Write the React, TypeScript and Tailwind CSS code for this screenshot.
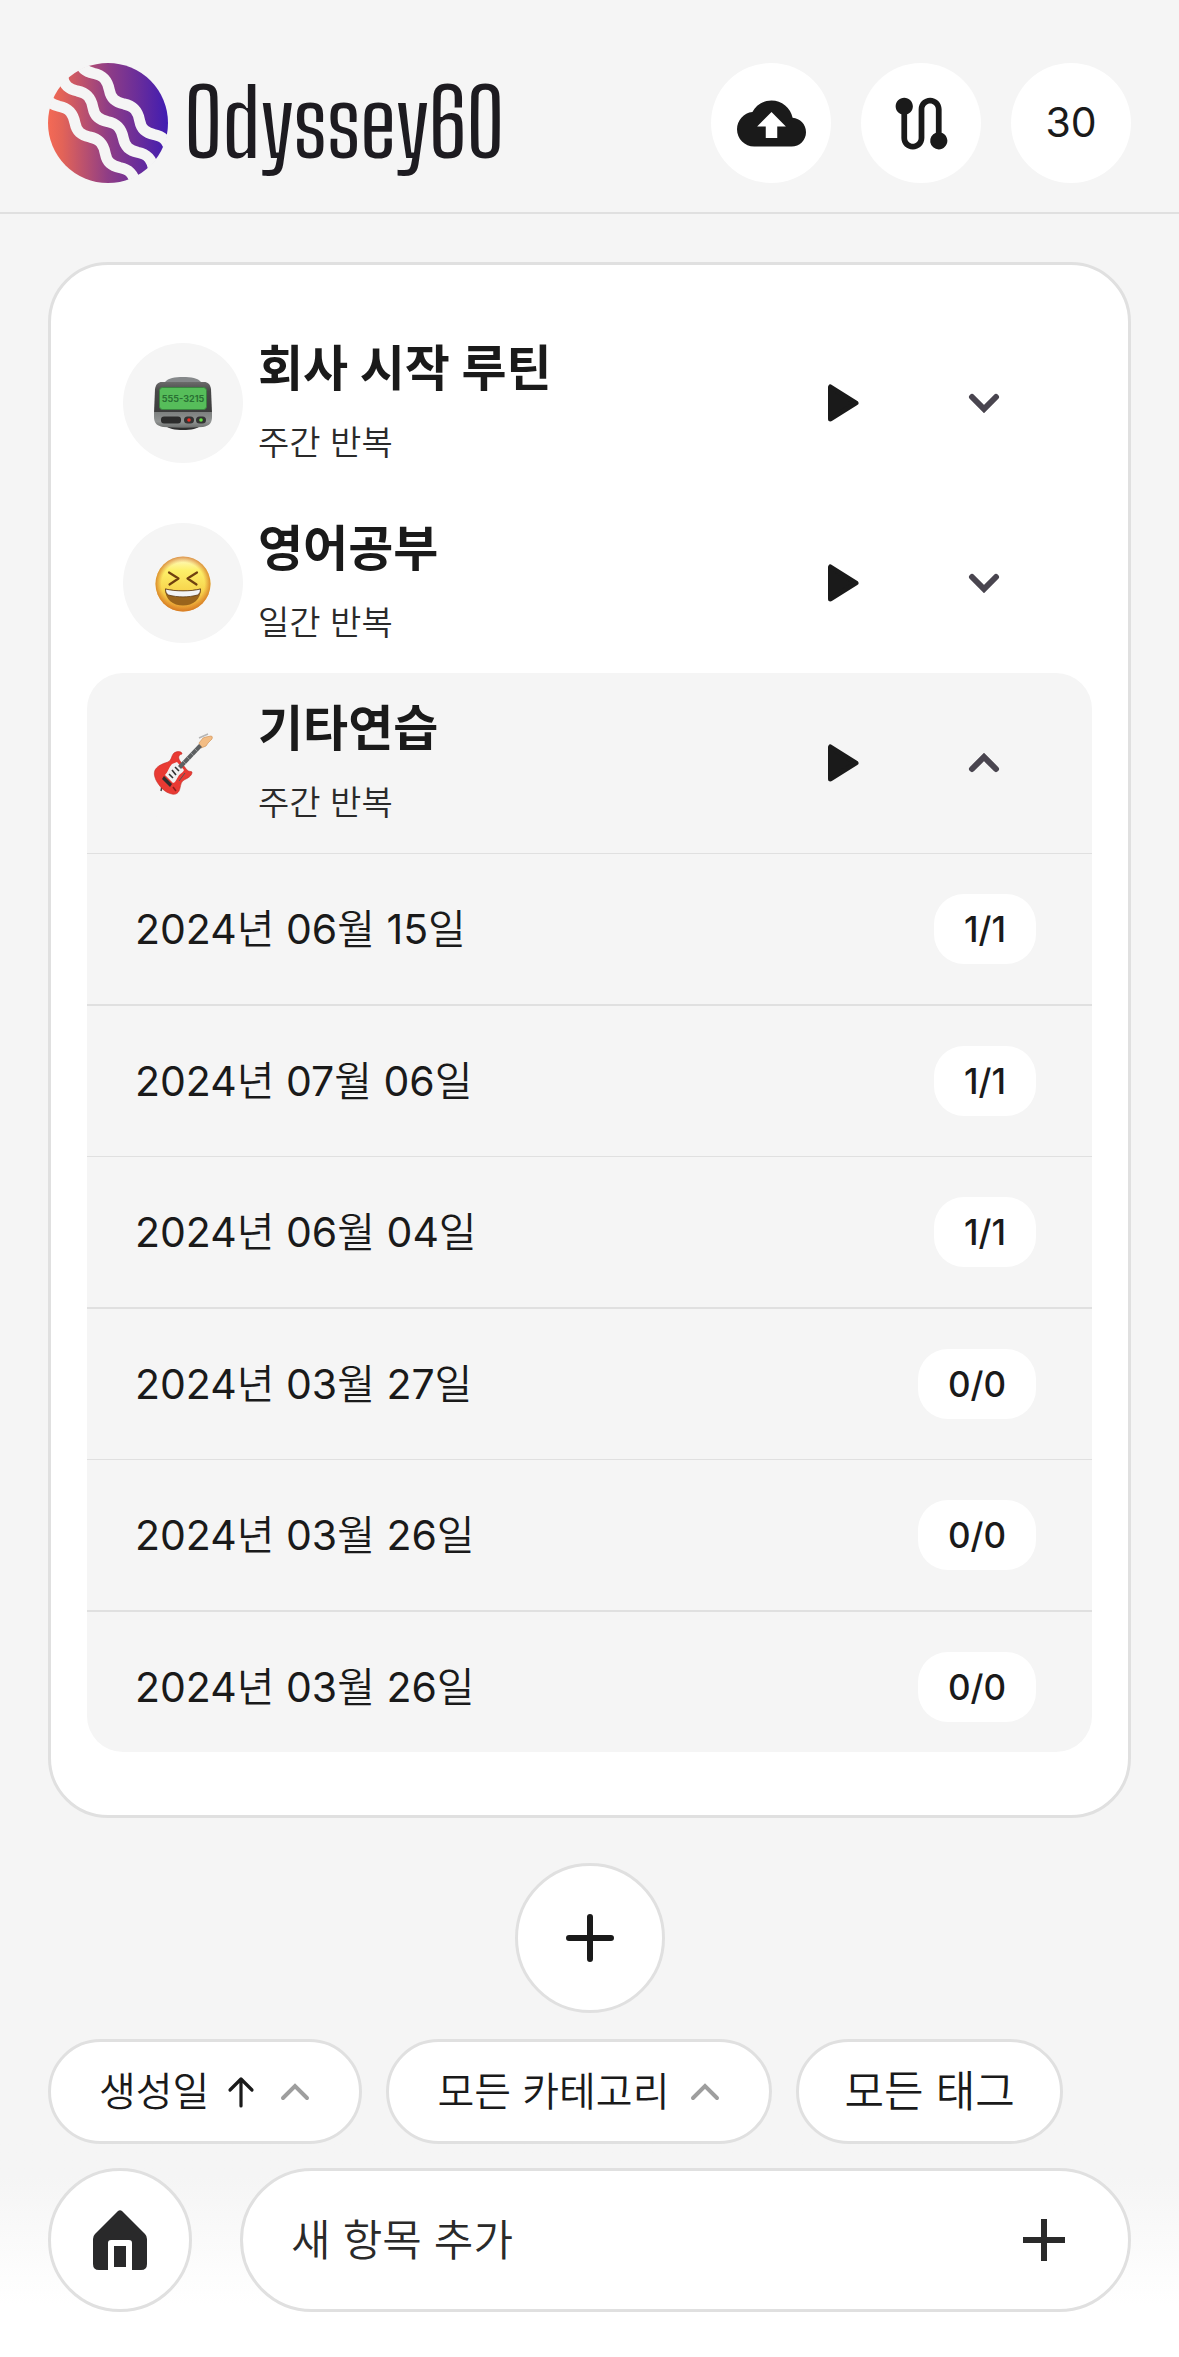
import { useState } from 'react';
import { MdBackup, MdRoute } from 'react-icons/md';

interface HistoryEntry {
  date: string;
  count: string;
}

interface Routine {
  id: string;
  title: string;
  repeat: string;
  icon: React.ReactNode;
  history: HistoryEntry[];
}

const Logo = () => (
  <svg className="size-[120px] shrink-0" viewBox="54 70 360 360" aria-hidden="true">
    <defs>
      <linearGradient id="logo-fill" x1="0" y1="0" x2="1" y2="0">
        <stop offset="0" stopColor="#f46a55" />
        <stop offset="0.12" stopColor="#e26358" />
        <stop offset="0.5" stopColor="#8f3d86" />
        <stop offset="0.75" stopColor="#6a2d9a" />
        <stop offset="1" stopColor="#401cb2" />
      </linearGradient>
      <clipPath id="logo-clip">
        <circle cx="234" cy="250" r="182" />
      </clipPath>
    </defs>
    <circle cx="234" cy="250" r="180" fill="url(#logo-fill)" />
    <g clipPath="url(#logo-clip)" fill="none" stroke="#f5f5f5" strokeWidth="33">
      <path d="M100 9c32 6 42 24 47 50c5 26 18 36 44 42c32 6 42 24 47 50c5 26 18 36 44 42c32 6 42 24 47 50c5 26 18 36 44 42c32 6 42 24 47 50" />
      <path d="M51 62c32 6 42 24 47 50c5 26 18 36 44 42c32 6 42 24 47 50c5 26 18 36 44 42c32 6 42 24 47 50c5 26 18 36 44 42c32 6 42 24 47 50" />
      <path d="M-3 108c32 6 42 24 47 50c5 26 18 36 44 42c32 6 42 24 47 50c5 26 18 36 44 42c32 6 42 24 47 50c5 26 18 36 44 42c32 6 42 24 47 50" />
    </g>
  </svg>
);

const PagerIcon = () => (
  <svg className="size-[60px]" viewBox="0 0 60 60" aria-hidden="true">
    <defs>
      <linearGradient id="pager-top" x1="0" y1="0" x2="0" y2="1">
        <stop offset="0" stopColor="#6b6b6b" />
        <stop offset="0.3" stopColor="#484848" />
        <stop offset="1" stopColor="#3c3c3c" />
      </linearGradient>
      <linearGradient id="pager-base" x1="0" y1="0" x2="0" y2="1">
        <stop offset="0" stopColor="#7d807f" />
        <stop offset="0.6" stopColor="#919493" />
        <stop offset="1" stopColor="#6c6e6d" />
      </linearGradient>
    </defs>
    <path d="M12 9C15 5 22 4 30 4s15 1 18 5z" fill="#85888a" />
    <path d="M12 52c3 4 10 5 18 5s15-1 18-5z" fill="#2f2f2f" />
    <path d="M9 9h42c4 0 6 2 7 7l1 24H1l1-24c1-5 3-7 7-7z" fill="url(#pager-top)" />
    <path d="M1 39h58v5c0 6-3 9-9 10-13 1-27 1-40 0-6-1-9-4-9-10z" fill="url(#pager-base)" />
    <rect x="6.500" y="14.500" width="47" height="22" rx="3" fill="#56bd5a" stroke="#3a8440" />
    <text x="30" y="29" textAnchor="middle" fontSize="9" fontWeight="700" fill="#2a7134" fontFamily="Inter">
      555-3215
    </text>
    <rect x="8" y="43.500" width="20" height="7" rx="3" fill="#2c2c2c" />
    <rect x="31" y="43.500" width="10" height="7" rx="3.500" fill="#333" />
    <rect x="43" y="43.500" width="10" height="7" rx="3.500" fill="#333" />
    <circle cx="36" cy="47" r="1.800" fill="#ee2c24" />
    <circle cx="48" cy="47" r="1.800" fill="#63e23f" />
  </svg>
);

const LaughIcon = () => (
  <svg className="size-[60px]" viewBox="0 0 60 60" aria-hidden="true">
    <defs>
      <linearGradient id="face" x1="0" y1="0" x2="0" y2="1">
        <stop offset="0" stopColor="#fffbd0" />
        <stop offset="0.25" stopColor="#fdf06a" />
        <stop offset="0.6" stopColor="#f8d64e" />
        <stop offset="1" stopColor="#e99a2e" />
      </linearGradient>
      <radialGradient id="face-edge">
        <stop offset="0.78" stopColor="#d9772a" stopOpacity="0" />
        <stop offset="1" stopColor="#d0701f" stopOpacity="0.75" />
      </radialGradient>
    </defs>
    <circle cx="30" cy="31" r="27.500" fill="url(#face)" />
    <circle cx="30" cy="31" r="27.500" fill="url(#face-edge)" />
    <path d="M16 19.500l9.500 6-9 6M44 19.500l-9.500 6 9 6" fill="none" stroke="#70400f" strokeWidth="2.200" strokeLinecap="round" strokeLinejoin="round" />
    <path d="M12 35.500c10 2.500 26 2.500 36 0 0 11-8 17-18 17s-18-6-18-17z" fill="#9a641c" />
    <path d="M12.500 36c10 2.500 25 2.500 35 0 0 3-1 5-3 6-9 2.500-20 2.500-29 0-2-1-3-3-3-6z" fill="#f2f3f5" stroke="#5d3a14" strokeWidth="0.800" />
  </svg>
);

const GuitarIcon = () => (
  <svg className="size-[60px] overflow-visible" viewBox="0 0 60 60" aria-hidden="true">
    <path d="M46 5l9-4" stroke="#b5b5b5" strokeWidth="1.500" />
    <path d="M46 10l4-5 3-1 5-1q2 0 1 3l-4 4-2 3-5 2z" fill="#f3bd85" stroke="#d1955a" strokeWidth="0.700" />
    <path d="M9 53l-1 5" stroke="#444" strokeWidth="1.500" />
    <path
      d="M15 29c4-2 3-6 6-9 3-2 8-2 8 1-4 1-4 4-2 7l7 9c2 2 4 1 5 2 0 4-4 6-8 8-3 2-3 4-4 8-1 5-4 7-8 6-7-1-13-8-16-14-4-9-1-14 12-18z"
      fill="#e93a33"
      stroke="#c22a24"
      strokeWidth="0.600"
    />
    <path d="M19 31l5-2 7 8c-1 3-5 4-6 7-2 3-3 6-5 6l-8-8c3-3 4-8 7-11z" fill="#f1f0f0" />
    <path d="M25 33L46 11l3 3-21 22z" fill="#5d6062" />
    <path d="M30 28l3 3M34 24l3 3M38 20l3 3M42 16l3 3" stroke="#a5a8aa" strokeWidth="0.700" />
    <path d="M22 34l4 4M19 37l4 5M16 41l4 4" stroke="#333" strokeWidth="1.600" />
    <path d="M11 43l8 8-2 3-8-8z" fill="#2e2e2e" />
    <path d="M26 48l6-8" stroke="#555" strokeWidth="1" />
    <path d="M20 54l3 4" stroke="#8b1f1c" strokeWidth="1.500" />
  </svg>
);

const PlayIcon = () => (
  <svg className="h-[38px] w-8" viewBox="0 0 32 38" aria-hidden="true">
    <path d="M2.500 3v32L28 19z" fill="#1a1a1a" stroke="#1a1a1a" strokeWidth="5" strokeLinejoin="round" />
  </svg>
);

const Chevron = ({ up, className, width }: { up?: boolean; className: string; width: number }) => (
  <svg className={className} viewBox="0 0 32 20" fill="none" stroke="currentColor" strokeWidth={width} strokeLinecap="round" aria-hidden="true">
    <path d={up ? 'M4 16L16 4l12 12' : 'M4 4l12 12L28 4'} />
  </svg>
);

const HomeIcon = () => (
  <svg className="h-[60px] w-[54px]" viewBox="0 0 54 60" fill="#29292a" aria-hidden="true">
    <path d="M25 1q2-1.600 4 0L52 24q2 2 2 5v25q0 6-6 6h-9V33q0-3-3-3H18q-3 0-3 3v27H6q-6 0-6-6V29q0-3 2-5z" />
    <rect x="21" y="36" width="12" height="21" />
  </svg>
);

const routines: Routine[] = [
  { id: 'work', title: '회사 시작 루틴', repeat: '주간 반복', icon: <PagerIcon />, history: [] },
  { id: 'english', title: '영어공부', repeat: '일간 반복', icon: <LaughIcon />, history: [] },
  {
    id: 'guitar',
    title: '기타연습',
    repeat: '주간 반복',
    icon: <GuitarIcon />,
    history: [
      { date: '2024년 06월 15일', count: '1/1' },
      { date: '2024년 07월 06일', count: '1/1' },
      { date: '2024년 06월 04일', count: '1/1' },
      { date: '2024년 03월 27일', count: '0/0' },
      { date: '2024년 03월 26일', count: '0/0' },
      { date: '2024년 03월 26일', count: '0/0' },
    ],
  },
];

const RoutineItem = ({ routine, open, onToggle }: { routine: Routine; open: boolean; onToggle: () => void }) => (
  <li className={`overflow-hidden rounded-[36px] ${open ? 'bg-[#f5f5f5]' : ''}`}>
    <div className="flex h-[180px] items-center px-9">
      <div className="flex size-[120px] shrink-0 items-center justify-center rounded-full bg-[#f5f5f5]">
        {routine.icon}
      </div>
      <div className="ml-[15px] flex-1 pb-1">
        <h2 className="text-[49px] leading-[72px] font-bold">{routine.title}</h2>
        <p className="mt-3 text-[34px] leading-[52px] text-[#2a2a2a]">{routine.repeat}</p>
      </div>
      <button className="flex size-[120px] items-center justify-center" aria-label={`${routine.title} 시작`}>
        <PlayIcon />
      </button>
      <button
        className="ml-2 flex h-[120px] w-[144px] items-center justify-center text-[#49454f]"
        aria-label={`${routine.title} 기록`}
        aria-expanded={open}
        onClick={onToggle}
      >
        <Chevron up={open} className="h-5 w-8" width={6} />
      </button>
    </div>
    {open && (
      <ul>
        {routine.history.map((entry, i) => (
          <li
            key={i}
            className="flex items-center justify-between border-t border-[#e0e0e0] py-10 pr-14 pl-12 last:pb-[30px] even:border-t-2"
          >
            <span className="font-[Inter,'Noto_Sans_CJK_KR_DemiLight','Noto_Sans_CJK_KR',sans-serif] text-[41px] leading-[70px] font-normal">
              {entry.date}
            </span>
            <span className="rounded-[30px] bg-white px-[30px] text-[35px] leading-[70px] font-medium">{entry.count}</span>
          </li>
        ))}
      </ul>
    )}
  </li>
);

export default function App() {
  const [openId, setOpenId] = useState('guitar');
  const [newItem, setNewItem] = useState('');

  return (
    <div className="flex min-h-screen flex-col bg-[#f5f5f5] font-[Inter,'Noto_Sans_CJK_KR',sans-serif] font-[350] text-[#1a1a1a]">
      <header className="flex items-center border-b-2 border-[#e0e0e0] px-12 pt-[63px] pb-[29px]">
        <Logo />
        <h1 className="ml-4 flex-1 font-['Big_Shoulders_Text','Big_Shoulders_Display','Roboto_Condensed','Liberation_Sans_Narrow',sans-serif] text-[92px] leading-[120px] font-normal text-[#1d1b20]">
          Odyssey60
        </h1>
        <div className="flex gap-[30px]">
          <button className="flex size-[120px] items-center justify-center rounded-full bg-white" aria-label="백업">
            <MdBackup className="size-[69px]" />
          </button>
          <button className="flex size-[120px] items-center justify-center rounded-full bg-white" aria-label="경로">
            <MdRoute className="size-[69px]" />
          </button>
          <button className="size-[120px] rounded-full bg-white text-[41px] font-normal">30</button>
        </div>
      </header>

      <main className="flex flex-1 flex-col px-12 pt-12">
        <ul className="rounded-[60px] border-3 border-[#e0e0e0] bg-white px-9 pt-12 pb-[63px]">
          {routines.map((routine) => (
            <RoutineItem
              key={routine.id}
              routine={routine}
              open={openId === routine.id}
              onToggle={() => setOpenId(openId === routine.id ? '' : routine.id)}
            />
          ))}
        </ul>

        <button
          className="mx-auto mt-[45px] flex size-[150px] items-center justify-center rounded-full border-3 border-[#e0e0e0] bg-white"
          aria-label="루틴 추가"
        >
          <svg className="size-12" viewBox="0 0 48 48" stroke="currentColor" strokeWidth="6" strokeLinecap="round" aria-hidden="true">
            <path d="M24 3v42M3 24h42" />
          </svg>
        </button>

        <div className="mt-[26px] flex gap-6">
          <button className="flex h-[105px] items-center rounded-full border-3 border-[#e0e0e0] bg-white px-12 text-[40px]">
            생성일
            <svg className="ml-[18px] h-8 w-7" viewBox="0 0 28 32" fill="none" stroke="currentColor" strokeWidth="3.200" strokeLinecap="round" strokeLinejoin="round" aria-hidden="true">
              <path d="M14 30V3M3 14L14 3l11 11" />
            </svg>
            <Chevron up className="ml-6 h-5 w-8 text-[#9e9e9e]" width={4} />
          </button>
          <button className="flex h-[105px] items-center rounded-full border-3 border-[#e0e0e0] bg-white px-12 text-[40px]">
            모든 카테고리
            <Chevron up className="ml-5 h-5 w-8 text-[#9e9e9e]" width={4} />
          </button>
          <button className="h-[105px] rounded-full border-3 border-[#e0e0e0] bg-white px-[45px] text-[43px]">모든 태그</button>
        </div>
      </main>

      <footer className="flex gap-12 bg-linear-to-b from-[#f5f5f5] from-15% to-white to-75% px-12 pt-6 pb-[45px]">
        <a
          href="#home"
          className="flex size-36 shrink-0 items-center justify-center rounded-full border-3 border-[#e0e0e0] bg-white"
          aria-label="홈"
        >
          <HomeIcon />
        </a>
        <form
          className="flex h-36 flex-1 items-center rounded-full border-3 border-[#e0e0e0] bg-white pr-[63px] pl-12 text-[#2a2a2a]"
          onSubmit={(e) => e.preventDefault()}
        >
          <input
            className="min-w-0 flex-1 bg-transparent text-[43px] outline-none placeholder:text-[#2a2a2a]"
            aria-label="새 항목 추가"
            placeholder="새 항목 추가"
            value={newItem}
            onChange={(e) => setNewItem(e.target.value)}
          />
          <button aria-label="항목 추가">
            <svg className="size-[42px]" viewBox="0 0 42 42" stroke="currentColor" strokeWidth="6" aria-hidden="true">
              <path d="M21 0v42M0 21h42" />
            </svg>
          </button>
        </form>
      </footer>
    </div>
  );
}
